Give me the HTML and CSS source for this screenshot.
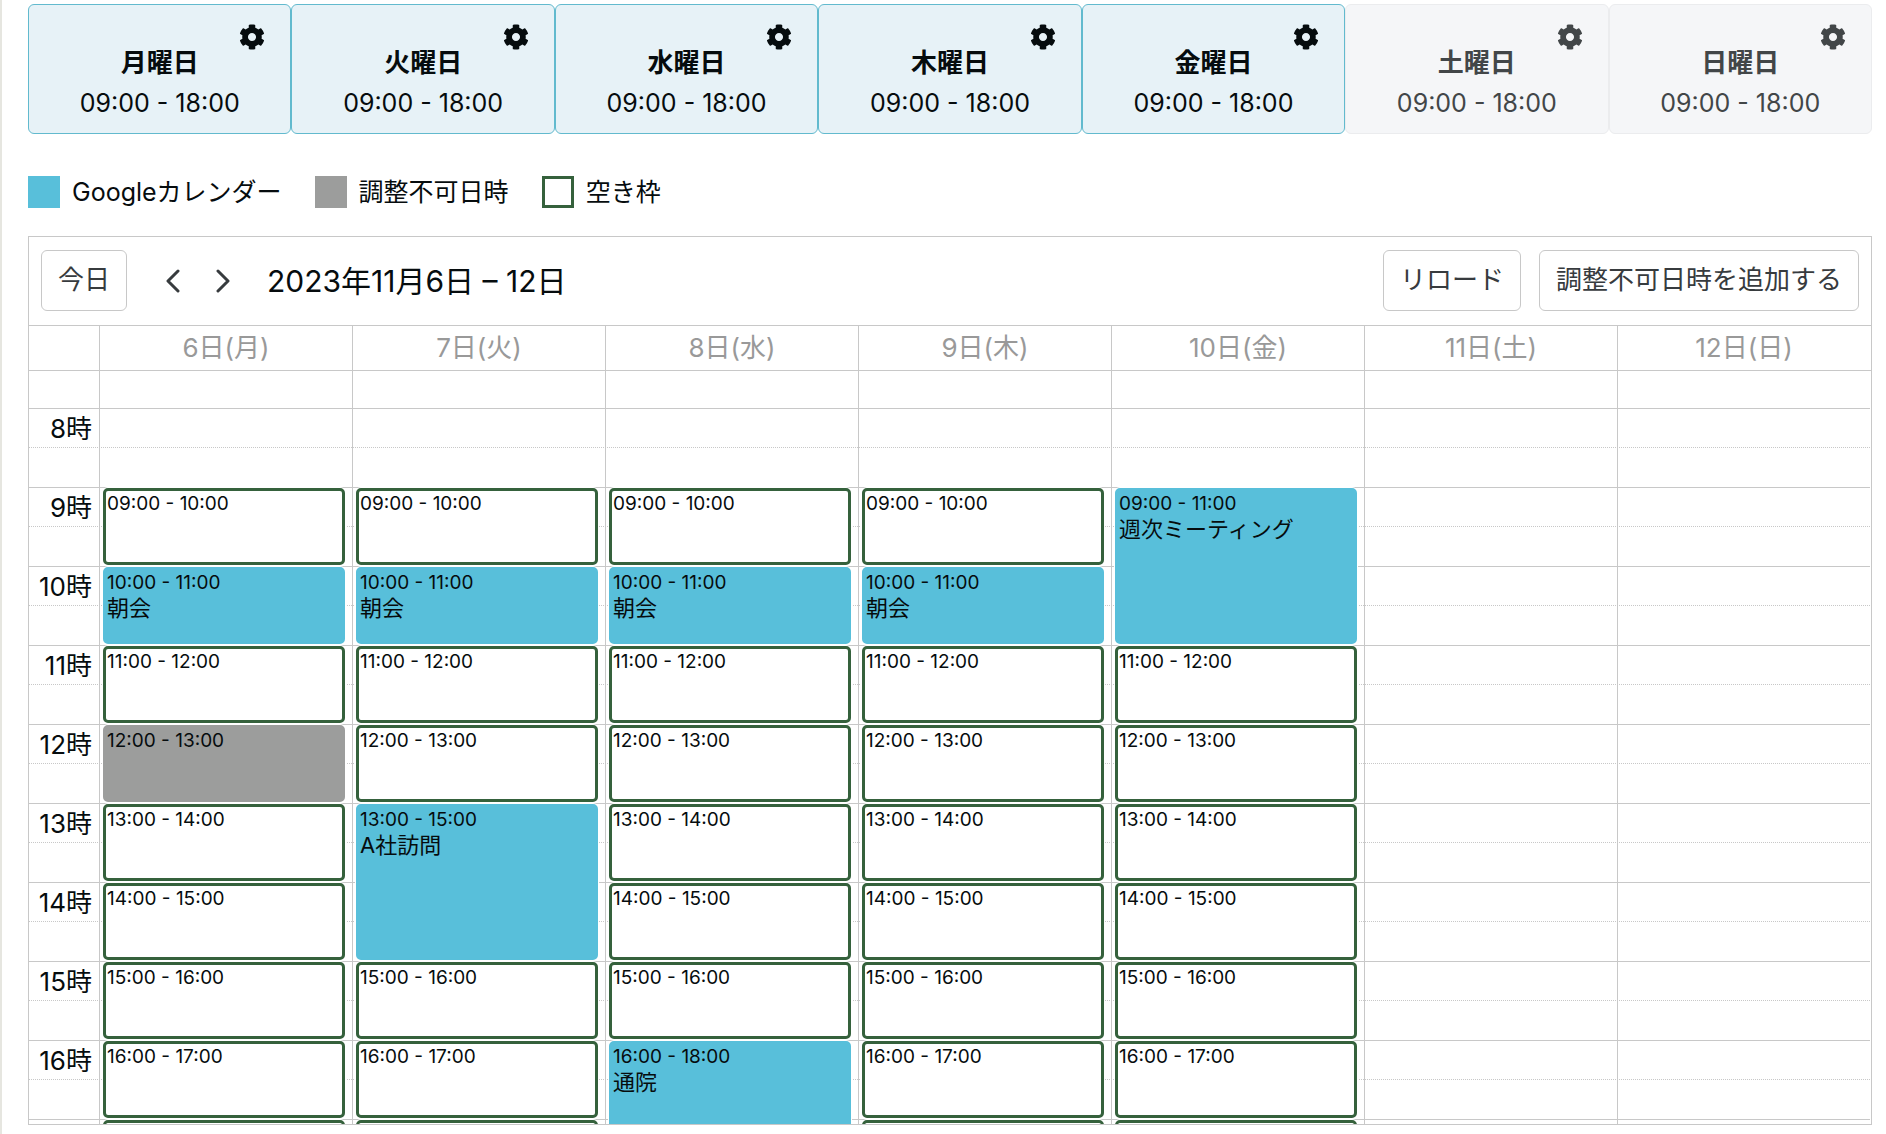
FILE: index.html
```html
<!DOCTYPE html>
<html lang="ja">
<head>
<meta charset="utf-8">
<meta name="viewport" content="width=device-width, initial-scale=1">
<title>2023年11月6日 – 12日</title>
<link rel="stylesheet" href="styles.css">
</head>
<body>
<svg class="sprite" aria-hidden="true">
  <symbol id="cog" viewBox="0 0 512 512"><path d="M487.4 315.7l-42.6-24.6c4.3-23.2 4.3-47 0-70.2l42.6-24.6c4.9-2.8 7.1-8.6 5.5-14-11.1-35.6-30-67.8-54.7-94.6-3.8-4.1-10-5.1-14.8-2.3L380.8 110c-17.9-15.4-38.5-27.3-60.8-35.1V25.8c0-5.6-3.9-10.5-9.4-11.7-36.7-8.2-74.3-7.8-109.2 0-5.5 1.2-9.4 6.1-9.4 11.7V75c-22.2 7.9-42.8 19.8-60.8 35.1L88.7 85.5c-4.9-2.8-11-1.9-14.8 2.3-24.7 26.7-43.6 58.9-54.7 94.6-1.7 5.4.6 11.2 5.5 14L67.3 221c-4.3 23.2-4.3 47 0 70.2l-42.6 24.6c-4.9 2.8-7.1 8.6-5.5 14 11.1 35.6 30 67.8 54.7 94.6 3.8 4.1 10 5.1 14.8 2.3l42.6-24.6c17.9 15.4 38.5 27.3 60.8 35.1v49.2c0 5.6 3.9 10.5 9.4 11.7 36.7 8.2 74.3 7.8 109.2 0 5.5-1.2 9.4-6.1 9.4-11.7v-49.2c22.2-7.9 42.8-19.8 60.8-35.1l42.6 24.6c4.9 2.8 11 1.9 14.8-2.3 24.7-26.7 43.6-58.9 54.7-94.6 1.5-5.5-.7-11.3-5.6-14.1zM256 336c-44.1 0-80-35.9-80-80s35.9-80 80-80 80 35.9 80 80-35.9 80-80 80z"/></symbol>
</svg>
<main class="page">
  <section class="weekdays">
    <div class="weekday"><button class="weekday-settings" type="button"><svg class="cog"><use href="#cog"/></svg></button><h2 class="weekday-name">月曜日</h2><p class="weekday-hours">09:00 - 18:00</p></div>
    <div class="weekday"><button class="weekday-settings" type="button"><svg class="cog"><use href="#cog"/></svg></button><h2 class="weekday-name">火曜日</h2><p class="weekday-hours">09:00 - 18:00</p></div>
    <div class="weekday"><button class="weekday-settings" type="button"><svg class="cog"><use href="#cog"/></svg></button><h2 class="weekday-name">水曜日</h2><p class="weekday-hours">09:00 - 18:00</p></div>
    <div class="weekday"><button class="weekday-settings" type="button"><svg class="cog"><use href="#cog"/></svg></button><h2 class="weekday-name">木曜日</h2><p class="weekday-hours">09:00 - 18:00</p></div>
    <div class="weekday"><button class="weekday-settings" type="button"><svg class="cog"><use href="#cog"/></svg></button><h2 class="weekday-name">金曜日</h2><p class="weekday-hours">09:00 - 18:00</p></div>
    <div class="weekday off"><button class="weekday-settings" type="button"><svg class="cog"><use href="#cog"/></svg></button><h2 class="weekday-name">土曜日</h2><p class="weekday-hours">09:00 - 18:00</p></div>
    <div class="weekday off"><button class="weekday-settings" type="button"><svg class="cog"><use href="#cog"/></svg></button><h2 class="weekday-name">日曜日</h2><p class="weekday-hours">09:00 - 18:00</p></div>
  </section>

  <ul class="legend">
    <li class="legend-item"><span class="swatch busy"></span>Googleカレンダー</li>
    <li class="legend-item"><span class="swatch blocked"></span>調整不可日時</li>
    <li class="legend-item"><span class="swatch free"></span>空き枠</li>
  </ul>

  <section class="calendar">
    <header class="toolbar">
      <button class="btn" type="button">今日</button>
      <div class="pager">
        <button class="arrow" type="button"><svg class="chevron" viewBox="0 0 16 24"><path d="M13 2 3 12l10 10"/></svg></button>
        <button class="arrow" type="button"><svg class="chevron" viewBox="0 0 16 24"><path d="M3 2l10 10L3 22"/></svg></button>
      </div>
      <h1 class="range">2023年11月6日 – 12日</h1>
      <div class="actions">
        <button class="btn" type="button">リロード</button>
        <button class="btn" type="button">調整不可日時を追加する</button>
      </div>
    </header>

    <div class="days">
      <span></span>
      <span class="day-head">6日(月)</span>
      <span class="day-head">7日(火)</span>
      <span class="day-head">8日(水)</span>
      <span class="day-head">9日(木)</span>
      <span class="day-head">10日(金)</span>
      <span class="day-head">11日(土)</span>
      <span class="day-head">12日(日)</span>
    </div>

    <div class="body">
      <div class="slots">
        <div class="hour h8">8時</div>
        <div class="hour h9">9時</div>
        <div class="hour h10">10時</div>
        <div class="hour h11">11時</div>
        <div class="hour h12">12時</div>
        <div class="hour h13">13時</div>
        <div class="hour h14">14時</div>
        <div class="hour h15">15時</div>
        <div class="hour h16">16時</div>
        <div class="hour h17"></div>

        <div class="column mon"></div>
        <div class="column tue"></div>
        <div class="column wed"></div>
        <div class="column thu"></div>
        <div class="column fri"></div>
        <div class="column sat"></div>
        <div class="column sun"></div>

        <div class="event free mon h9"><time>09:00 - 10:00</time></div>
        <div class="event busy mon h10"><time>10:00 - 11:00</time><span class="event-title">朝会</span></div>
        <div class="event free mon h11"><time>11:00 - 12:00</time></div>
        <div class="event blocked mon h12"><time>12:00 - 13:00</time></div>
        <div class="event free mon h13"><time>13:00 - 14:00</time></div>
        <div class="event free mon h14"><time>14:00 - 15:00</time></div>
        <div class="event free mon h15"><time>15:00 - 16:00</time></div>
        <div class="event free mon h16"><time>16:00 - 17:00</time></div>
        <div class="event free mon h17"></div>

        <div class="event free tue h9"><time>09:00 - 10:00</time></div>
        <div class="event busy tue h10"><time>10:00 - 11:00</time><span class="event-title">朝会</span></div>
        <div class="event free tue h11"><time>11:00 - 12:00</time></div>
        <div class="event free tue h12"><time>12:00 - 13:00</time></div>
        <div class="event busy tue h13 two-hours"><time>13:00 - 15:00</time><span class="event-title">A社訪問</span></div>
        <div class="event free tue h15"><time>15:00 - 16:00</time></div>
        <div class="event free tue h16"><time>16:00 - 17:00</time></div>
        <div class="event free tue h17"></div>

        <div class="event free wed h9"><time>09:00 - 10:00</time></div>
        <div class="event busy wed h10"><time>10:00 - 11:00</time><span class="event-title">朝会</span></div>
        <div class="event free wed h11"><time>11:00 - 12:00</time></div>
        <div class="event free wed h12"><time>12:00 - 13:00</time></div>
        <div class="event free wed h13"><time>13:00 - 14:00</time></div>
        <div class="event free wed h14"><time>14:00 - 15:00</time></div>
        <div class="event free wed h15"><time>15:00 - 16:00</time></div>
        <div class="event busy wed h16 two-hours"><time>16:00 - 18:00</time><span class="event-title">通院</span></div>

        <div class="event free thu h9"><time>09:00 - 10:00</time></div>
        <div class="event busy thu h10"><time>10:00 - 11:00</time><span class="event-title">朝会</span></div>
        <div class="event free thu h11"><time>11:00 - 12:00</time></div>
        <div class="event free thu h12"><time>12:00 - 13:00</time></div>
        <div class="event free thu h13"><time>13:00 - 14:00</time></div>
        <div class="event free thu h14"><time>14:00 - 15:00</time></div>
        <div class="event free thu h15"><time>15:00 - 16:00</time></div>
        <div class="event free thu h16"><time>16:00 - 17:00</time></div>
        <div class="event free thu h17"></div>

        <div class="event busy fri h9 two-hours"><time>09:00 - 11:00</time><span class="event-title">週次ミーティング</span></div>
        <div class="event free fri h11"><time>11:00 - 12:00</time></div>
        <div class="event free fri h12"><time>12:00 - 13:00</time></div>
        <div class="event free fri h13"><time>13:00 - 14:00</time></div>
        <div class="event free fri h14"><time>14:00 - 15:00</time></div>
        <div class="event free fri h15"><time>15:00 - 16:00</time></div>
        <div class="event free fri h16"><time>16:00 - 17:00</time></div>
        <div class="event free fri h17"></div>
      </div>
    </div>
  </section>
</main>
</body>
</html>
```
FILE: styles.css
```css
:root {
  --line: #c8c8c8;
  --text: #060c0e;
  --busy: #58bfda;
  --blocked: #9c9d9c;
  --free: #35613c;
}

*, *::before, *::after { box-sizing: border-box; }

body {
  margin: 0;
  background: #fff;
  color: var(--text);
  font-family: Inter, "Noto Sans CJK JP", sans-serif;
  font-size: 26px;
  line-height: 40px;
}

h1, h2, p, ul { margin: 0; padding: 0; }

button { font: inherit; color: #373b3e; cursor: pointer; }

.sprite { display: none; }

.page {
  display: flex;
  flex-direction: column;
  height: 100vh;
  padding: 4px 14px 9px 26px;
  border-left: 2px solid #e6e6e0;
}

/* Weekday cards */
.weekdays { display: grid; grid-template-columns: repeat(7, 1fr); }

.weekday {
  position: relative;
  padding: 38px 8px 10px;
  border: 1px solid #62bace;
  border-radius: 6px;
  background: #e7f2f7;
  text-align: center;
}

.weekday.off { background: #f5f6f8; border-color: #ebecee; color: #424648; }

.weekday-settings {
  position: absolute;
  top: 19px;
  right: 25px;
  display: flex;
  padding: 0;
  border: 0;
  background: none;
  color: inherit;
}

.cog { width: 26px; height: 26px; fill: currentColor; }

.weekday-name { font-size: 26px; font-weight: 700; }

.weekday-hours { font-size: 25px; }

/* Legend */
.legend {
  display: flex;
  gap: 33px;
  margin: 38px 0 24px;
  font-size: 25px;
  list-style: none;
}

.legend-item { display: flex; align-items: center; gap: 12px; }

.swatch { width: 32px; height: 32px; }

.busy { background: var(--busy); border: 3px solid var(--busy); }
.blocked { background: var(--blocked); border: 3px solid var(--blocked); }
.free { background: #fff; border: 3px solid var(--free); }

/* Calendar frame */
.calendar {
  display: flex;
  flex: 1;
  flex-direction: column;
  min-height: 0;
  border: 1px solid var(--line);
}

.toolbar {
  display: flex;
  align-items: center;
  padding: 13px 12px 14px;
  border-bottom: 1px solid var(--line);
}

.btn {
  padding: 9px 16px 10px;
  border: 1px solid var(--line);
  border-radius: 6px;
  background: #fff;
  line-height: 40px;
}

.pager { display: flex; gap: 18px; margin: 0 28px 0 30px; }

.arrow { display: flex; padding: 8px; border: 0; background: none; }

.chevron {
  width: 16px;
  height: 24px;
  fill: none;
  stroke: currentColor;
  stroke-width: 3;
  stroke-linecap: round;
  stroke-linejoin: round;
}

.range { font-size: 30px; font-weight: 400; }

.actions { display: flex; gap: 18px; margin-left: auto; }

.days, .slots {
  display: grid;
  grid-template-columns: 70px repeat(7, 1fr);
  padding-right: 1px;
}

.days { border-bottom: 1px solid var(--line); }

.day-head {
  padding: 2px 0;
  border-left: 1px solid var(--line);
  color: #999;
  text-align: center;
}

/* Time slots: half an hour before 8:00, then one row per hour */
.body { flex: 1; min-height: 0; overflow: hidden; }

.slots { grid-template-rows: 37px repeat(10, 79px); }

.hour {
  position: relative;
  display: grid;
  grid-column: 1 / -1;
  grid-template-columns: 63px;
  justify-items: end;
  border-top: 1px solid var(--line);
}

.hour::after {
  content: "";
  position: absolute;
  inset: 38px 0 auto;
  border-top: 1px dotted var(--line);
}

.column { grid-row: 1 / -1; border-left: 1px solid var(--line); }

.event {
  display: flex;
  flex-direction: column;
  margin: 1px 7px 1px 4px;
  padding: 1px;
  border-radius: 5px;
  box-shadow: 0 0 0 1px #fff;
  font-size: 19px;
  line-height: 24px;
  z-index: 1;
}

.event-title { font-size: 22px; line-height: 26px; }

.mon { grid-column: 2; }
.tue { grid-column: 3; }
.wed { grid-column: 4; }
.thu { grid-column: 5; }
.fri { grid-column: 6; }
.sat { grid-column: 7; }
.sun { grid-column: 8; }

.h8 { grid-row: 2; }
.h9 { grid-row: 3; }
.h10 { grid-row: 4; }
.h11 { grid-row: 5; }
.h12 { grid-row: 6; }
.h13 { grid-row: 7; }
.h14 { grid-row: 8; }
.h15 { grid-row: 9; }
.h16 { grid-row: 10; }
.h17 { grid-row: 11; }
.two-hours { grid-row-end: span 2; }
```
